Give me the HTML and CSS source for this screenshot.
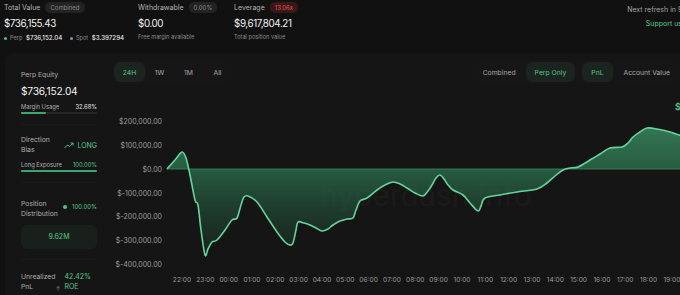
FILE: index.html
```html
<!DOCTYPE html>
<html lang="en">
  <head>
    <meta charset="UTF-8" />
    <title>Hyperdash Portfolio</title>
    <link rel="stylesheet" href="styles.css">
  </head>
  <body>
    <div class="top">
      <div class="stat stat-total">
        <div class="stat-head">Total Value <span class="badge">Combined</span></div>
        <div class="stat-value">$736,155.43</div>
        <div class="stat-sub">
          <span class="dot dot-green"></span>Perp <b>$736,152.04</b>
          <span class="dot dot-blue"></span>Spot <b>$3.397294</b>
        </div>
      </div>
      <div class="stat stat-withdraw">
        <div class="stat-head">Withdrawable <span class="badge">0.00%</span></div>
        <div class="stat-value">$0.00</div>
        <div class="stat-sub">Free margin available</div>
      </div>
      <div class="stat">
        <div class="stat-head">Leverage <span class="badge badge-red">13.06x</span></div>
        <div class="stat-value">$9,617,804.21</div>
        <div class="stat-sub">Total position value</div>
      </div>
      <div class="refresh">
        <div>Next refresh in 9s</div>
        <div class="support">Support us</div>
      </div>
    </div>

    <div class="card">
      <div class="side">
        <div class="section">
          <div class="label">Perp Equity</div>
          <div class="equity">$736,152.04</div>
          <div class="row"><span>Margin Usage</span><span class="white">32.68%</span></div>
          <div class="bar"><div class="bar-fill" style="width: 33%"></div></div>
        </div>
        <div class="section">
          <div class="split">
            <div class="label">Direction<br>Bias</div>
            <div class="long">
              <svg width="10" height="7" viewBox="0 0 10 7"><path d="M0.5 6 L3.5 3 L5.5 4.5 L9 1 M6.5 1 H9 V3.5" fill="none" stroke="#56c98e" stroke-width="0.9"/></svg>
              LONG
            </div>
          </div>
          <div class="row"><span>Long Exposure</span><span class="green">100.00%</span></div>
          <div class="bar"><div class="bar-fill" style="width: 100%"></div></div>
        </div>
        <div class="section section-dist">
          <div class="split">
            <div class="label">Position<br>Distribution</div>
            <div class="pct"><span class="dot dot-green big"></span>100.00%</div>
          </div>
          <div class="dist">9.62M</div>
        </div>
        <div class="section last">
          <div class="split">
            <div class="label">Unrealized<br>PnL</div>
            <div class="roe"><span class="arrow">↑</span><span>42.42%<br>ROE</span></div>
          </div>
        </div>
      </div>

      <div class="chart">
        <div class="chart-head">
          <div class="tabs tabs-time">
            <span class="tab active">24H</span>
            <span class="tab">1W</span>
            <span class="tab">1M</span>
            <span class="tab">All</span>
          </div>
          <div class="tabs tabs-right">
            <span class="tab">Combined</span>
            <span class="tab active">Perp Only</span>
            <span class="tab active">PnL</span>
            <span class="tab">Account Value</span>
          </div>
        </div>
        <svg class="plot" width="580" height="200">
          <defs>
            <linearGradient id="fill" gradientUnits="userSpaceOnUse" x1="0" y1="125" x2="0" y2="258">
              <stop offset="0" stop-color="#3f9a6b" stop-opacity="0.75"/>
              <stop offset="0.33" stop-color="#2f7a53" stop-opacity="0.7"/>
              <stop offset="1" stop-color="#1e3a2b" stop-opacity="0.35"/>
            </linearGradient>
          </defs>
          <g transform="translate(-105,-95)">
            <text class="watermark" x="320" y="206">hyperdash.info</text>
            <g class="ylab">
              <text x="162" y="124">$200,000.00</text>
              <text x="162" y="148">$100,000.00</text>
              <text x="162" y="172">$0.00</text>
              <text x="162" y="196">$-100,000.00</text>
              <text x="162" y="219">$-200,000.00</text>
              <text x="162" y="243">$-300,000.00</text>
              <text x="162" y="267">$-400,000.00</text>
            </g>
            <g class="xlab" id="xlab"></g>
            <path id="area" fill="url(#fill)"/>
            <line x1="167" y1="169" x2="690" y2="169" stroke="#3d8a61" stroke-width="0.8"/>
            <path id="line" fill="none" stroke="#63d49c" stroke-width="1.6" stroke-linejoin="round"/>
            <text class="tip" x="675" y="110">$</text>
          </g>
        </svg>
      </div>
    </div>

    <script>
      // pnl points traced in page coordinates
      const pts = [
        [167,169],[175,160],[182,152],[186,158],[190,175],[195,200],[198,205],[201,230],[205,255],
        [208,249],[212,242],[217,240],[225,230],[232,220],[237,218],[241,205],[244,197],[248,196],
        [257,202],[267,217],[277,232],[285,242],[290,245],[293,243],[296,230],[298,222],[304,223],
        [310,225],[316,228],[322,231],[328,229],[333,225],[340,221],[347,219],[353,218],[356,210],
        [360,201],[367,198],[377,190],[385,185],[393,182],[400,184],[407,188],[415,193],[423,196],
        [428,191],[432,185],[436,178],[440,175],[444,179],[448,185],[453,190],[463,195],[470,203],
        [478,211],[481,206],[485,198],[500,195],[517,192],[537,189],[547,183],[555,176],[563,170],
        [570,168],[578,167],[590,160],[600,154],[610,148],[622,147],[628,143],[633,137],[640,132],
        [647,128],[657,129],[670,132],[690,139]
      ];

      function smooth(p) {
        let d = "M" + p[0][0] + " " + p[0][1];
        for (let i = 0; i < p.length - 1; i++) {
          const a = p[i - 1] || p[i], b = p[i], c = p[i + 1], e = p[i + 2] || c;
          const c1x = b[0] + (c[0] - a[0]) / 6, c1y = b[1] + (c[1] - a[1]) / 6;
          const c2x = c[0] - (e[0] - b[0]) / 6, c2y = c[1] - (e[1] - b[1]) / 6;
          d += ` C${c1x.toFixed(1)} ${c1y.toFixed(1)} ${c2x.toFixed(1)} ${c2y.toFixed(1)} ${c[0]} ${c[1]}`;
        }
        return d;
      }

      const d = smooth(pts);
      document.getElementById("line").setAttribute("d", d);
      document.getElementById("area").setAttribute("d", d + " L690 169 L167 169 Z");

      const hours = ["22:00","23:00","00:00","01:00","02:00","03:00","04:00","05:00","06:00","07:00","08:00",
        "09:00","10:00","11:00","12:00","13:00","14:00","15:00","16:00","17:00","18:00","19:00"];
      const xlab = document.getElementById("xlab");
      hours.forEach((h, i) => {
        const t = document.createElementNS("http://www.w3.org/2000/svg", "text");
        t.setAttribute("x", (182 + i * 23.33).toFixed(1));
        t.setAttribute("y", "282");
        t.textContent = h;
        xlab.appendChild(t);
      });
    </script>
  </body>
</html>
```

FILE: styles.css
```css
body {
  margin: 0;
  background-color: #111111;
  color: #f2f2f2;
  font-family: Inter, "Noto Sans", sans-serif;
  width: 680px;
  height: 295px;
  overflow: hidden;
}
.top {
  display: flex;
  padding: 2px 0 0 4px;
  height: 51px;
  box-sizing: border-box;
}
.stat {
  width: 96px;
}
.stat-total {
  width: 134px;
}
.stat-head {
  font-size: 7px;
  color: #b5b5b5;
  height: 10px;
  display: flex;
  align-items: center;
  gap: 5px;
}
.badge {
  background-color: #232323;
  color: #8a8a8a;
  font-size: 6px;
  padding: 2px 5px;
  border-radius: 5px;
}
.badge-red {
  background-color: #3b1717;
  color: #e0575a;
}
.stat-value {
  font-size: 9.8px;
  letter-spacing: -0.4px;
  margin-top: 5px;
  line-height: 13px;
}
.stat-sub {
  font-size: 5.6px;
  color: #8c8c8c;
  margin-top: 4px;
}
.stat-sub b {
  font-weight: 500;
  font-size: 6.2px;
  color: #e8e8e8;
  margin-right: 6px;
  margin-left: 2px;
}
.dot {
  display: inline-block;
  width: 3px;
  height: 3px;
  border-radius: 50%;
  margin-right: 3px;
  vertical-align: middle;
}
.dot-green {
  background-color: #4fc488;
}
.dot-blue {
  background-color: #7d93b0;
}
.dot.big {
  width: 4px;
  height: 4px;
}
.refresh {
  margin-left: auto;
  margin-right: -6px;
  text-align: right;
  font-size: 7px;
  color: #a5a5a5;
  padding-top: 3px;
}
.support {
  color: #56c98e;
  font-size: 7px;
  margin-top: 5px;
  margin-right: 4px;
}
.card {
  display: flex;
  margin-left: 5px;
  margin-top: 2px;
  width: 700px;
  height: 270px;
  background-color: #151515;
  border-radius: 8px;
}
.side {
  width: 100px;
  flex: none;
  padding: 17px 8px 0 16px;
  box-sizing: border-box;
}
.section {
  border-bottom: 1px solid #1b1b1b;
  padding-bottom: 10px;
  margin-bottom: 10px;
}
.section-dist {
  padding-top: 6px;
}
.section.last {
  border-bottom: none;
  padding-top: 2px;
}
.label {
  font-size: 6.8px;
  color: #b0b0b0;
  line-height: 10.5px;
}
.equity {
  font-size: 10.2px;
  letter-spacing: -0.2px;
  margin-top: 3px;
  line-height: 14px;
}
.row {
  display: flex;
  justify-content: space-between;
  font-size: 5.8px;
  color: #b0b0b0;
  margin-top: 5px;
}
.white {
  color: #e8e8e8;
}
.green {
  color: #56c98e;
}
.bar {
  height: 2px;
  background-color: #262626;
  border-radius: 1px;
  margin-top: 2px;
}
.bar-fill {
  height: 100%;
  background-color: #3fa56f;
  border-radius: 1px;
}
.split {
  display: flex;
  justify-content: space-between;
  align-items: center;
}
.long {
  color: #56c98e;
  font-size: 7px;
  display: flex;
  align-items: center;
  gap: 3px;
}
.pct {
  color: #56c98e;
  font-size: 6px;
  display: flex;
  align-items: center;
  gap: 2px;
  margin-top: -5px;
}
.dist {
  margin-top: 5px;
  height: 24px;
  border-radius: 6px;
  background-color: #19201b;
  color: #56c98e;
  font-size: 7px;
  display: flex;
  align-items: center;
  justify-content: center;
}
.roe {
  color: #56c98e;
  font-size: 7px;
  line-height: 10.5px;
  display: flex;
  gap: 4px;
  align-items: flex-end;
  margin-right: 6px;
}
.arrow {
  color: #8a8a8a;
  font-size: 6px;
  line-height: 8px;
}
.chart {
  flex: 1;
  padding: 9px 0 0 9px;
}
.chart-head {
  display: flex;
  justify-content: space-between;
  height: 20px;
  margin-bottom: 13px;
  width: 566px;
}
.tabs {
  display: flex;
  background-color: #161616;
  border-radius: 6px;
}
.tabs-time {
  padding-right: 2px;
}
.tabs-time .tab {
  width: 29px;
  justify-content: center;
  padding: 0;
}
.tabs-time .tab:first-child {
  width: 31px;
}
.tab {
  font-size: 6.8px;
  color: #a8a8a8;
  padding: 0 9px;
  display: flex;
  align-items: center;
  border-radius: 6px;
}
.tabs-right .tab:nth-child(2) {
  margin-left: 1px;
  margin-right: 7px;
}
.tabs-right .tab:nth-child(3) {
  margin-right: 3px;
}
.tabs-right .tab:last-child {
  padding: 0 10px 0 8px;
}
.tab.active {
  background-color: #1b241e;
  color: #56c98e;
}
.plot {
  display: block;
  margin-left: -9px;
  overflow: visible;
}
.ylab text {
  font-size: 7px;
  fill: #9c9c9c;
  text-anchor: end;
}
.xlab text {
  font-size: 6.6px;
  fill: #9c9c9c;
  text-anchor: middle;
}
.watermark {
  font-size: 30px;
  fill: #1b1b1b;
}
.tip {
  font-size: 9px;
  font-weight: 600;
  fill: #56c98e;
}
```
